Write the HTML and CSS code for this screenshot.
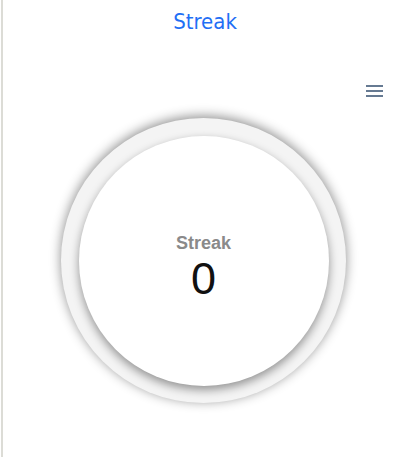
FILE: index.html
```html
<!DOCTYPE html>
<html>
<head>
<meta charset="utf-8">
<link rel="stylesheet" href="styles.css">
</head>
<body>
<div class="page">
  <header class="title">Streak</header>
  <div class="toolbar">
    <button class="menu" aria-label="menu">
      <svg width="17" height="14" viewBox="0 0 17 14"><rect x="0" y="1" width="17" height="2" fill="#667a92"/><rect x="0" y="6" width="17" height="2" fill="#667a92"/><rect x="0" y="11" width="17" height="2" fill="#667a92"/></svg>
    </button>
  </div>
  <div class="stage">
    <div class="ring">
      <div class="face">
        <div class="label">Streak</div>
        <div class="value">0</div>
      </div>
    </div>
  </div>
</div>
</body>
</html>
```
FILE: styles.css
```css
html, body { margin: 0; padding: 0; background: #fff; }
body { font-family: "Liberation Sans", Arial, sans-serif; }
.page {
  height: 457px;
  border-left: 2px solid #dcdcd6;
  margin-left: 1px;
  box-sizing: border-box;
}
.title {
  text-align: center;
  color: #1f6ff5;
  font-family: "DejaVu Sans Condensed", "DejaVu Sans", sans-serif;
  font-stretch: condensed;
  font-size: 22px;
  line-height: 44px;
  padding-left: 5px;
}
.toolbar {
  display: flex;
  justify-content: flex-end;
  padding: 40px 19px 0 0;
  height: 14px;
}
.menu { border: 0; background: none; padding: 0; display: block; line-height: 0; }
.stage {
  display: flex;
  justify-content: center;
  padding-top: 20px;
  padding-left: 2px;
}
.ring {
  width: 285px; height: 285px;
  border-radius: 50%;
  background: #f4f4f4;
  box-shadow: 0 -2px 12px rgba(0,0,0,0.45);
  display: flex; align-items: center; justify-content: center;
}
.face {
  width: 250px; height: 250px;
  border-radius: 50%;
  background: #fff;
  box-shadow: 0 4px 10px rgba(0,0,0,0.4);
  display: flex; flex-direction: column; align-items: center; justify-content: center;
  padding-top: 12px;
  box-sizing: border-box;
}
.label {
  color: #8a8a8a;
  font-weight: bold;
  font-size: 18px;
  line-height: 20px;
}
.value {
  color: #111;
  font-size: 45px;
  line-height: 44px;
  margin-top: 4px;
}
```
